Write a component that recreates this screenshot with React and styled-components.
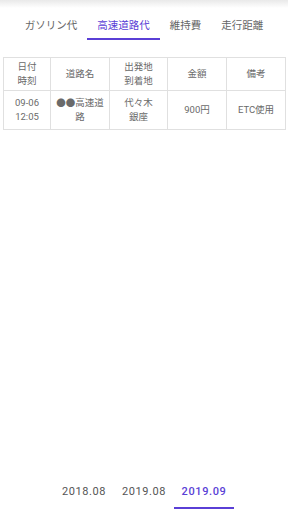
import React from 'react'
import styled, { createGlobalStyle } from 'styled-components'

const GlobalStyle = createGlobalStyle`
  html, body {
    margin: 0;
    padding: 0;
    background: #fff;
  }
  body {
    font-family: Roboto, "Noto Sans CJK JP", sans-serif;
  }
`

const Page = styled.div`
  display: flex;
  flex-direction: column;
  height: 100vh;
  overflow: hidden;
`

const TopShade = styled.div`
  height: 8px;
  background: linear-gradient(#e9e9e9, #fff);
`

const TabBar = styled.div`
  display: flex;
  justify-content: center;
  height: 32px;
`

const Tab = styled.div`
  box-sizing: border-box;
  display: flex;
  align-items: center;
  justify-content: center;
  padding: 2px 10px 0;
  font-size: 10.5px;
  color: ${props => (props.active ? '#5a3fd6' : '#666')};
  border-bottom: 2px solid ${props => (props.active ? '#5a3fd6' : 'transparent')};
`

const Content = styled.div`
  flex: 1;
  padding: 17px 3px 0;
`

const Table = styled.table`
  width: 282px;
  border-collapse: collapse;
  table-layout: fixed;
  color: #6a6a6a;
  font-size: 9.5px;
  line-height: 14px;
  text-align: center;

  th, td {
    box-sizing: border-box;
    border: 1px solid #e0e0e0;
    font-weight: normal;
    padding: 2px 4px;
  }
  th {
    height: 32px;
  }
  td {
    height: 39px;
  }
  th:nth-child(1) { width: 47px; }
  th:nth-child(2) { width: 59px; }
  th:nth-child(3) { width: 58px; }
  th:nth-child(4) { width: 59px; }
  th:nth-child(5) { width: 59px; }
`

const Footer = styled.div`
  display: flex;
  justify-content: center;
  height: 34px;
  margin-bottom: 3px;
`

const MonthTab = styled.div`
  box-sizing: border-box;
  width: 60px;
  display: flex;
  align-items: center;
  justify-content: center;
  font-size: 11px;
  letter-spacing: 0.6px;
  font-weight: ${props => (props.active ? 500 : 400)};
  color: ${props => (props.active ? '#5a3fd6' : '#555')};
  border-bottom: 2px solid ${props => (props.active ? '#5a3fd6' : 'transparent')};
`

const tabs = ['ガソリン代', '高速道路代', '維持費', '走行距離']
const months = ['2018.08', '2019.08', '2019.09']

export default function App() {
  return (
    <Page>
      <GlobalStyle />
      <TopShade />
      <TabBar>
        {tabs.map(t => (
          <Tab key={t} active={t === '高速道路代'}>{t}</Tab>
        ))}
      </TabBar>
      <Content>
        <Table>
          <thead>
            <tr>
              <th>日付<br />時刻</th>
              <th>道路名</th>
              <th>出発地<br />到着地</th>
              <th>金額</th>
              <th>備考</th>
            </tr>
          </thead>
          <tbody>
            <tr>
              <td>09-06<br />12:05</td>
              <td>●●高速道路</td>
              <td>代々木<br />銀座</td>
              <td>900円</td>
              <td>ETC使用</td>
            </tr>
          </tbody>
        </Table>
      </Content>
      <Footer>
        {months.map(m => (
          <MonthTab key={m} active={m === '2019.09'}>{m}</MonthTab>
        ))}
      </Footer>
    </Page>
  )
}
